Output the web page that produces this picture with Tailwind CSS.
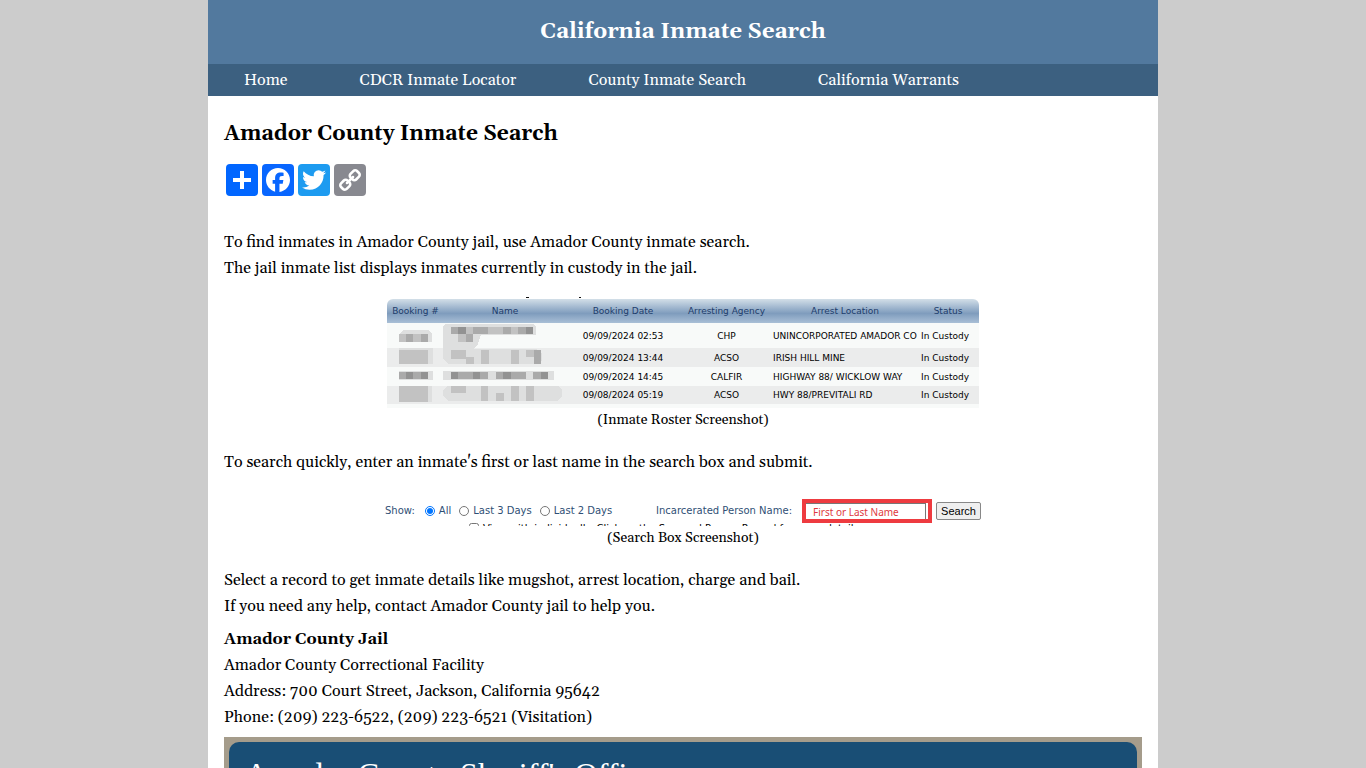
<!DOCTYPE html>
<html lang="en">
<head>
    <meta charset="UTF-8">
    <meta name="viewport" content="width=device-width, initial-scale=1.0">
    <title>Amador County Inmate Search</title>
    <script src="https://cdn.jsdelivr.net/npm/@tailwindcss/browser@4"></script>
</head>
<body class="bg-[#ccc] font-[Georgia,Gelasio,'Liberation_Serif',serif] text-base leading-[26px] text-black">
    <div class="mx-auto min-h-screen max-w-[950px] bg-white">
        <!-- Header -->
        <header class="bg-[#52799e] py-4 text-center text-white">
            <p class="text-[22px] leading-8 font-bold">California Inmate Search</p>
        </header>
        <nav class="flex flex-wrap bg-[#3c6080] leading-8 text-white">
            <a href="#" class="px-9">Home</a>
            <a href="#" class="px-9">CDCR Inmate Locator</a>
            <a href="#" class="px-9">County Inmate Search</a>
            <a href="#" class="px-9">California Warrants</a>
        </nav>

        <main class="px-4 pt-5">
            <h1 class="text-[21px] leading-9 font-bold">Amador County Inmate Search</h1>

            <!-- Share buttons -->
            <div class="mt-3 flex gap-1 px-0.5">
                <a href="#" aria-label="Share" class="size-8 rounded bg-[#0166ff]">
                    <svg viewBox="0 0 32 32" fill="#fff"><path d="M14 7h4v18h-4z"/><path d="M7 14h18v4H7z"/></svg>
                </a>
                <a href="#" aria-label="Facebook" class="size-8 rounded bg-[#0866ff]">
                    <svg viewBox="0 0 32 32" fill="#fff"><path d="M28 16c0-6.627-5.373-12-12-12S4 9.373 4 16c0 5.628 3.875 10.35 9.101 11.647v-7.98h-2.474V16H13.1v-1.58c0-4.085 1.849-5.978 5.859-5.978.76 0 2.072.15 2.608.298v3.325c-.283-.03-.775-.045-1.386-.045-1.967 0-2.728.745-2.728 2.683V16h3.92l-.673 3.667h-3.247v8.245C23.395 27.195 28 22.135 28 16"/></svg>
                </a>
                <a href="#" aria-label="Twitter" class="size-8 rounded bg-[#1d9bf0]">
                    <svg viewBox="0 0 32 32" fill="#fff"><path d="M28 8.557a10 10 0 0 1-2.828.775 4.93 4.93 0 0 0 2.166-2.725 9.7 9.7 0 0 1-3.13 1.194 4.92 4.92 0 0 0-3.593-1.55 4.924 4.924 0 0 0-4.794 6.049c-4.09-.21-7.72-2.17-10.15-5.15a4.94 4.94 0 0 0-.665 2.477c0 1.71.87 3.214 2.19 4.1a5 5 0 0 1-2.23-.616v.06c0 2.39 1.7 4.38 3.952 4.83-.414.115-.85.174-1.297.174q-.476-.001-.928-.086a4.935 4.935 0 0 0 4.6 3.42 9.9 9.9 0 0 1-6.114 2.107q-.597 0-1.175-.068a13.95 13.95 0 0 0 7.55 2.213c9.056 0 14.01-7.507 14.01-14.013q0-.32-.015-.637c.96-.695 1.795-1.56 2.455-2.55z"/></svg>
                </a>
                <a href="#" aria-label="Copy link" class="size-8 rounded bg-[#888990]">
                    <svg viewBox="0 0 32 32" fill="#fff"><path d="M7.591 21.177c0-.36.126-.665.377-.917l2.804-2.804a1.235 1.235 0 0 1 .913-.378c.377 0 .7.144.97.43-.026.028-.11.11-.255.25-.144.14-.24.236-.29.29a2.82 2.82 0 0 0-.2.256 1.056 1.056 0 0 0-.177.344 1.43 1.43 0 0 0-.046.37c0 .36.126.666.377.918a1.25 1.25 0 0 0 .918.377c.126.001.251-.015.373-.047.125-.037.242-.096.345-.175.09-.06.176-.127.256-.2.1-.094.196-.19.29-.29.14-.142.223-.23.25-.254.297.28.445.607.445.984 0 .36-.126.664-.377.916l-2.778 2.79a1.242 1.242 0 0 1-.917.364c-.36 0-.665-.118-.917-.35l-1.982-1.97a1.223 1.223 0 0 1-.378-.9zm9.477-9.504c0-.36.126-.665.377-.917l2.777-2.79a1.235 1.235 0 0 1 .913-.378c.35 0 .656.12.917.364l1.984 1.968c.254.252.38.553.38.903 0 .36-.126.665-.38.917l-2.802 2.804a1.238 1.238 0 0 1-.916.364c-.377 0-.7-.14-.97-.418.026-.027.11-.11.255-.25a7.5 7.5 0 0 0 .29-.29c.072-.08.139-.166.2-.255.08-.103.14-.22.176-.344.032-.12.048-.245.047-.37 0-.36-.126-.662-.377-.914a1.247 1.247 0 0 0-.917-.377c-.136 0-.26.015-.37.046-.114.03-.23.09-.346.175a3.868 3.868 0 0 0-.256.2c-.054.05-.15.148-.29.29-.14.146-.222.23-.25.258-.294-.278-.442-.606-.442-.983zM5.003 21.177c0 1.078.382 1.99 1.146 2.736l1.982 1.968c.745.75 1.658 1.12 2.736 1.12 1.087 0 2.004-.38 2.75-1.143l2.777-2.79c.75-.747 1.12-1.66 1.12-2.737 0-1.106-.392-2.046-1.183-2.818l1.186-1.185c.774.79 1.708 1.186 2.805 1.186 1.078 0 1.995-.376 2.75-1.13l2.803-2.81c.751-.754 1.128-1.671 1.128-2.748 0-1.08-.382-1.993-1.146-2.738L23.875 6.12C23.13 5.372 22.218 5 21.139 5c-1.087 0-2.004.382-2.75 1.146l-2.777 2.79c-.75.747-1.12 1.66-1.12 2.737 0 1.105.392 2.045 1.183 2.817l-1.186 1.186c-.774-.79-1.708-1.186-2.805-1.186-1.078 0-1.995.377-2.75 1.132L6.13 18.43c-.754.754-1.126 1.668-1.126 2.747z"/></svg>
                </a>
            </div>

            <p class="mt-[33px]">To find inmates in Amador County jail, use Amador County inmate search.<br>The jail inmate list displays inmates currently in custody in the jail.</p>

            <!-- Inmate roster -->
            <figure class="mt-4 text-center">
                <div class="relative mx-auto max-w-[592px] pt-0.5">
                    <table class="w-full table-fixed font-['DejaVu_Sans',sans-serif] text-[9px] leading-3 whitespace-nowrap">
                        <colgroup>
                            <col class="w-[57px]"><col class="w-[122px]"><col class="w-[114px]"><col class="w-[93px]"><col class="w-[144px]"><col class="w-[62px]">
                        </colgroup>
                        <thead class="bg-linear-to-b from-[#d3dfe8] via-[#7f9cbd] via-60% to-[#a9bfd6] text-[#1d3c6b]">
                            <tr class="h-6">
                                <th class="rounded-tl-md font-normal">Booking #</th>
                                <th class="font-normal">Name</th>
                                <th class="font-normal">Booking Date</th>
                                <th class="font-normal">Arresting Agency</th>
                                <th class="font-normal">Arrest Location</th>
                                <th class="rounded-tr-md font-normal">Status</th>
                            </tr>
                        </thead>
                        <tbody>
                            <tr class="h-[25px] bg-[#f8faf9]">
                                <td></td><td></td><td>09/09/2024 02:53</td><td>CHP</td><td class="text-left">UNINCORPORATED AMADOR CO</td><td class="text-left pl-1">In Custody</td>
                            </tr>
                            <tr class="h-[19px] bg-[#ebecec]">
                                <td></td><td></td><td>09/09/2024 13:44</td><td>ACSO</td><td class="text-left">IRISH HILL MINE</td><td class="text-left pl-1">In Custody</td>
                            </tr>
                            <tr class="h-[19px] bg-[#f8faf9]">
                                <td></td><td></td><td>09/09/2024 14:45</td><td>CALFIR</td><td class="text-left">HIGHWAY 88/ WICKLOW WAY</td><td class="text-left pl-1">In Custody</td>
                            </tr>
                            <tr class="h-[18px] bg-[#ebecec]">
                                <td></td><td></td><td>09/08/2024 05:19</td><td>ACSO</td><td class="text-left">HWY 88/PREVITALI RD</td><td class="text-left pl-1">In Custody</td>
                            </tr>
                            <tr class="h-1 bg-[#f8faf9]"><td colspan="6"></td></tr>
                        </tbody>
                    </table>
                    <!-- Redacted booking numbers and names -->
                    <svg class="absolute top-0 left-0" width="200" height="111" viewBox="0 -2 200 111" shape-rendering="crispEdges">
                        <path fill="#111" d="M139 -2h3v1h-3zM192 -2h2v1h-2z"/>
                        <path fill="#dedfdf" d="M16 31h25l4 4v8H12v-8zM58 25h88l3 3v8H94l-3 9-5 5h63l6 4v8l-5 3H62l-6-5V28zM12 49h34v16H12zM12 72h34v9H12zM56 72h111v9H56zM16 87h29v16h-8l-3-2H17l-5-4v-6zM61 87h110l4 4v6l-4 5H62l-6-5v-6z"/>
                        <path fill="#c2c2c2" d="M12 35h29v8H12zM64 28h82v7H64zM71 35h15v8H71zM12 51h29v14H12zM64 51h15v9H64zM79 58h8v7h-8zM94 51h8v14h-8zM124 51h8v14h-8zM139 51h8v7h-8zM12 87h29v16H12zM64 87h15v7H64zM94 87h7v15h-7zM109 94h8v8h-8zM124 87h8v15h-8zM139 87h8v15h-8z"/>
                        <path fill="#aaa" d="M19 35h7v8h-7zM34 35h7v8h-7zM64 28h15v7H64zM86 28h15v7H86zM116 28h8v7h-8zM131 28h15v7h-15zM79 35h7v8h-7zM154 51v14h-7V51zM12 73h29v7H12zM64 73h37v7H64zM109 73h30v7h-30zM146 73h15v7h-15z"/>
                        <path fill="#929292" d="M19 73h7v7h-7zM34 73h7v7h-7zM64 73h7v7h-7zM86 73h7v7h-7zM116 73h8v7h-8zM154 73h7v7h-7zM71 28h8v7h-8zM139 28h7v7h-7z"/>
                    </svg>
                </div>
                <figcaption class="text-sm leading-6">(Inmate Roster Screenshot)</figcaption>
            </figure>

            <p class="mt-[17px]">To search quickly, enter an inmate's first or last name in the search box and submit.</p>

            <!-- Search box -->
            <figure class="mt-6 text-center">
                <form class="mx-auto max-w-[596px] font-['DejaVu_Sans',sans-serif] text-[10px] leading-6 whitespace-nowrap text-[#2f4f75]">
                    <div class="flex items-center">
                        <span class="mr-2.5">Show:</span>
                        <input type="radio" name="show" id="all" checked class="mr-1 size-[10px]"><label for="all" class="mr-2">All</label>
                        <input type="radio" name="show" id="three" class="mr-1 size-[10px]"><label for="three" class="mr-2">Last 3 Days</label>
                        <input type="radio" name="show" id="two" class="mr-1 size-[10px]"><label for="two" class="mr-auto">Last 2 Days</label>
                        <label for="person" class="mr-2.5">Incarcerated Person Name:</label>
                        <div class="mr-1 border-4 border-[#ee3b40] pr-0.5">
                            <input id="person" type="text" placeholder="First or Last Name" class="block h-4 w-30 border-t border-r border-[#777] px-[7px] font-['Noto_Sans',sans-serif] text-[10px] placeholder:text-[#e0393e]">
                        </div>
                        <button type="button" class="h-[18px] w-[45px] rounded-xs border border-[#888] bg-[#efefef] font-['Liberation_Sans',sans-serif] text-[11px] leading-4 text-black">Search</button>
                    </div>
                    <div class="flex h-[3px] items-start gap-1 overflow-hidden pl-21 text-[10px] leading-3 text-black">
                        <input type="checkbox" id="bail" class="size-[10px] shrink-0">
                        <label for="bail">View with individually. Click on the Scanned Person Record for more details.</label>
                    </div>
                </form>
                <figcaption class="text-sm leading-6">(Search Box Screenshot)</figcaption>
            </figure>

            <p class="mt-[17px]">Select a record to get inmate details like mugshot, arrest location, charge and bail.<br>If you need any help, contact Amador County jail to help you.</p>

            <p class="mt-[7px]"><strong>Amador County Jail</strong><br>Amador County Correctional Facility<br>Address: 700 Court Street, Jackson, California 95642<br>Phone: (209) 223-6522, (209) 223-6521 (Visitation)</p>

            <!-- Sheriff's office banner -->
            <div class="mt-[7px] bg-[#a59c8b] p-[5px]">
                <h2 class="rounded-[10px] bg-[#194e75] px-4 py-3 font-['Liberation_Serif',serif] text-[32px] leading-10 text-white">Amador County Sheriff's Office</h2>
            </div>
        </main>
    </div>
</body>
</html>
